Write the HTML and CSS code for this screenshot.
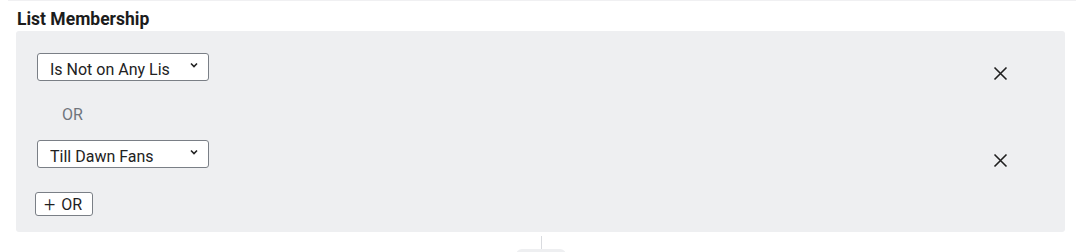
FILE: index.html
```html
<!DOCTYPE html>
<html>
<head>
<meta charset="utf-8">
<link rel="stylesheet" href="styles.css">
</head>
<body>
<div class="page">
  <div class="topline"></div>
  <h2 class="title">List Membership</h2>
  <div class="panel">
    <div class="row">
      <div class="select"><span class="select-text">Is Not on Any Lis</span><svg class="chev" width="8" height="6" viewBox="0 0 8 6"><path d="M1 1.5 L4 4.5 L7 1.5" fill="none" stroke="#222" stroke-width="1.6"/></svg></div>
      <svg class="close" width="15" height="15" viewBox="0 0 15 15"><path d="M1.5 1.5 L13.5 13.5 M13.5 1.5 L1.5 13.5" stroke="#1f1f1f" stroke-width="1.6"/></svg>
    </div>
    <div class="or-label">OR</div>
    <div class="row">
      <div class="select"><span class="select-text">Till Dawn Fans</span><svg class="chev" width="8" height="6" viewBox="0 0 8 6"><path d="M1 1.5 L4 4.5 L7 1.5" fill="none" stroke="#222" stroke-width="1.6"/></svg></div>
      <svg class="close" width="15" height="15" viewBox="0 0 15 15"><path d="M1.5 1.5 L13.5 13.5 M13.5 1.5 L1.5 13.5" stroke="#1f1f1f" stroke-width="1.6"/></svg>
    </div>
    <button class="add-or"><span class="plus">+</span><span>OR</span></button>
  </div>
  <div class="connector">
    <div class="vline"></div>
    <div class="stub"></div>
  </div>
</div>
</body>
</html>
```
FILE: styles.css
```css
html, body {
  margin: 0;
  padding: 0;
  background: #ffffff;
  font-family: Roboto, "Noto Sans", sans-serif;
  color: #1f1f1f;
}
.page {
  width: 1084px;
  height: 252px;
  overflow: hidden;
  position: relative;
}
.topline {
  height: 1px;
  background: #f0f0f2;
  margin: 0 8px;
}
.title {
  margin: 7px 0 0 17px;
  font-size: 17.5px;
  font-weight: 700;
  line-height: 23px;
  color: #1c1c1c;
}
.panel {
  margin: 0 19px 0 16px;
  background: #eeeff1;
  border-radius: 3px;
  height: 201px;
  box-sizing: border-box;
  padding: 22px 0 0 21px;
}
.row {
  display: flex;
  align-items: center;
  justify-content: space-between;
  padding-right: 57px;
  height: 28px;
}
.select {
  width: 172px;
  height: 28px;
  box-sizing: border-box;
  border: 1px solid #7a7f86;
  border-radius: 3px;
  background: #ffffff;
  display: flex;
  align-items: center;
  justify-content: space-between;
  padding: 4px 10px 0 12px;
  font-size: 16px;
  color: #222;
}
.select-text {
  white-space: nowrap;
  overflow: hidden;
}
.chev {
  margin-top: -9px;
}
.close {
  margin-top: 12px;
}
.or-label {
  height: 59px;
  box-sizing: border-box;
  padding: 8px 0 0 25px;
  font-size: 16px;
  color: #70757c;
  display: flex;
  align-items: center;
}
.add-or {
  margin-top: 24px;
  margin-left: -2px;
  display: flex;
  align-items: center;
  gap: 6px;
  height: 24px;
  width: 58px;
  box-sizing: border-box;
  border: 1px solid #7a7f86;
  border-radius: 3px;
  background: #ffffff;
  font-family: Roboto, "Noto Sans", sans-serif;
  font-size: 16px;
  font-weight: 400;
  color: #1f1f1f;
  padding: 1px 0 0 8px;
}
.plus {
  font-weight: 300;
  font-size: 20px;
  line-height: 18px;
  margin-top: -1px;
}
.connector {
  display: flex;
  flex-direction: column;
  align-items: center;
  width: 50px;
  margin-left: 516px;
}
.vline {
  width: 1px;
  height: 13px;
  background: #d9dbdf;
  margin-top: 4px;
}
.stub {
  width: 50px;
  height: 10px;
  background: #eeeff1;
  border-radius: 6px 6px 0 0;
}
```
